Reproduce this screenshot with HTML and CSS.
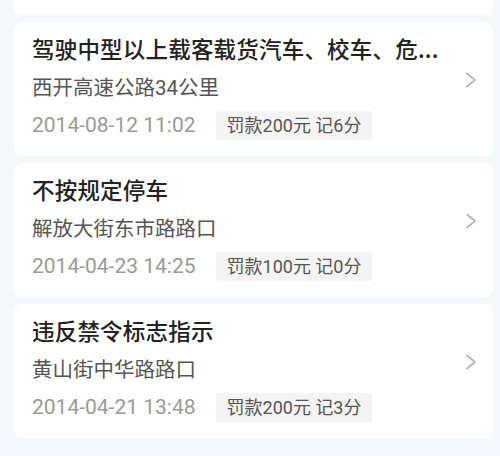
FILE: index.html
```html
<!DOCTYPE html>
<html lang="zh-CN">
<head>
<meta charset="utf-8">
<title>违章记录</title>
<link rel="stylesheet" href="styles.css">
</head>
<body>
<div class="list">
  <div class="card card-tail"></div>

  <div class="card">
    <div class="content">
      <div class="title">驾驶中型以上载客载货汽车、校车、危...</div>
      <div class="place">西开高速公路34公里</div>
      <div class="meta">
        <span class="time">2014-08-12 11:02</span>
        <span class="badge">罚款200元 记6分</span>
      </div>
    </div>
    <svg class="chevron" width="14" height="18" viewBox="0 0 14 18"><polyline points="3,2.5 11,9 3,15.5" fill="none" stroke="#b4b4b4" stroke-width="1.7" stroke-linecap="round" stroke-linejoin="round"/></svg>
  </div>

  <div class="card">
    <div class="content">
      <div class="title">不按规定停车</div>
      <div class="place">解放大街东市路路口</div>
      <div class="meta">
        <span class="time">2014-04-23 14:25</span>
        <span class="badge">罚款100元 记0分</span>
      </div>
    </div>
    <svg class="chevron" width="14" height="18" viewBox="0 0 14 18"><polyline points="3,2.5 11,9 3,15.5" fill="none" stroke="#b4b4b4" stroke-width="1.7" stroke-linecap="round" stroke-linejoin="round"/></svg>
  </div>

  <div class="card">
    <div class="content">
      <div class="title">违反禁令标志指示</div>
      <div class="place">黄山街中华路路口</div>
      <div class="meta">
        <span class="time">2014-04-21 13:48</span>
        <span class="badge">罚款200元 记3分</span>
      </div>
    </div>
    <svg class="chevron" width="14" height="18" viewBox="0 0 14 18"><polyline points="3,2.5 11,9 3,15.5" fill="none" stroke="#b4b4b4" stroke-width="1.7" stroke-linecap="round" stroke-linejoin="round"/></svg>
  </div>
</div>
</body>
</html>
```

FILE: styles.css
```css
html, body {
  margin: 0;
  padding: 0;
  background: #f4f8fa;
}

body {
  width: 500px;
  height: 456px;
  overflow: hidden;
  font-family: Roboto, "Noto Sans CJK SC", sans-serif;
}

.list {
  display: flex;
  flex-direction: column;
  gap: 7px;
  padding: 0 7px 0 14px;
}

.card {
  display: flex;
  align-items: center;
  background: #ffffff;
  border-radius: 8px;
  height: 134px;
  box-sizing: border-box;
  padding: 0 15px 0 18px;
}

.card-tail {
  height: 15px;
  border-radius: 0 0 8px 8px;
}

.content {
  flex: 1;
  min-width: 0;
  display: flex;
  flex-direction: column;
  margin-bottom: 5px;
}

.title {
  font-size: 22.5px;
  line-height: 30px;
  font-weight: 500;
  color: #222222;
  white-space: nowrap;
  letter-spacing: 0.2px;
  font-family: "Noto Sans CJK SC", sans-serif;
}

.place {
  margin-top: 10px;
  font-size: 20.5px;
  line-height: 30px;
  color: #555555;
}

.meta {
  margin-top: 7px;
  display: flex;
  align-items: center;
  gap: 20px;
}

.time {
  font-size: 21px;
  line-height: 30px;
  color: #9a9a9a;
}

.badge {
  background: #f4f4f4;
  color: #555555;
  font-size: 18px;
  line-height: 29px;
  padding: 0 11px;
  border-radius: 2px;
}

.chevron {
  flex: none;
  margin-bottom: 18px;
}
```
